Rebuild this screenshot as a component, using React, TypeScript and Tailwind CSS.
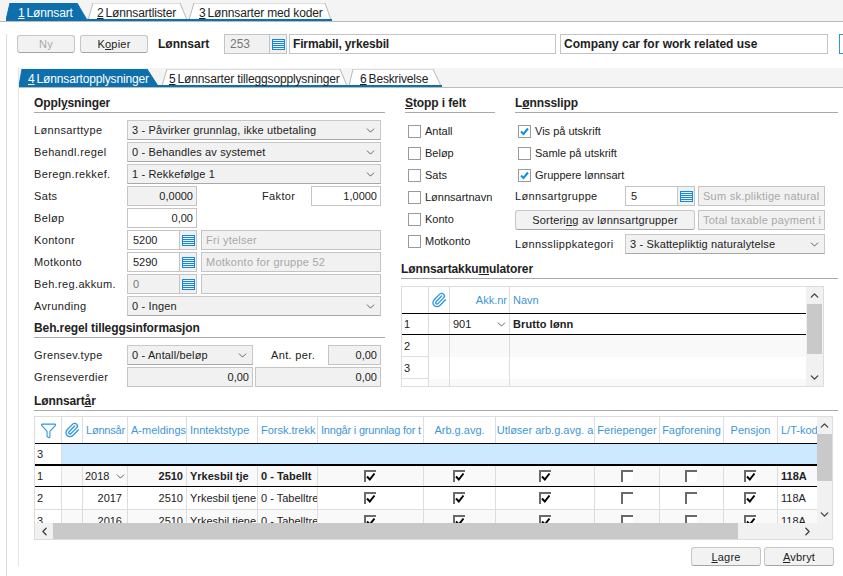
import React from "react";
import { ChevronDown, ChevronUp, ChevronLeft, ChevronRight, Paperclip, Funnel } from "lucide-react";

const ListIcon = () => (
  <svg width="13" height="11" viewBox="0 0 13 11" fill="none" stroke="#1087e0" strokeWidth="1">
    <rect x="0.5" y="0.5" width="12" height="10" />
    <path d="M1 2.5H12M1 4.5H12M1 6.5H12M1 8.5H12" />
  </svg>
);

const Tab = ({ w, points, active, pad, digit, text }: { w: string; points: string; active?: boolean; pad: string; digit: string; text: string }) => (
  <div className={`relative h-full shrink-0 ${w}`}>
    <svg className="absolute inset-0 h-full w-full">
      <polygon points={points} fill={active ? "#0d70ad" : "#ffffff"} stroke={active ? "#0d70ad" : "#b9b9b9"} />
    </svg>
    <div className={`relative flex h-full items-center whitespace-nowrap pt-[3px] text-[12px] tracking-[-0.15px] ${pad} ${active ? "text-white" : "text-[#222]"}`}>
      <u>{digit}</u>
      <span className="ml-[2px]">{text}</span>
    </div>
  </div>
);

const Heading = ({ children, w }: { children: React.ReactNode; w: string }) => (
  <div className={`h-[17px] border-b border-[#aaaaaa] text-[12px] font-bold leading-[14px] tracking-[-0.1px] text-[#222] ${w}`}>{children}</div>
);

const Row = ({ children, cls = "h-5 mb-[2px]" }: { children: React.ReactNode; cls?: string }) => (
  <div className={`flex items-stretch ${cls}`}>{children}</div>
);

const Label = ({ children, w = "w-[93px]" }: { children: React.ReactNode; w?: string }) => (
  <div className={`flex shrink-0 items-center whitespace-nowrap tracking-[0.35px] ${w}`}>{children}</div>
);

const Select = ({ value, w }: { value: string; w: string }) => (
  <div className={`flex shrink-0 items-center justify-between border border-[#c8c8c8] border-b-[#a8a8a8] bg-[#f1f1f1] pl-1 pr-[3px] tracking-[0.15px] ${w}`}>
    <span className="whitespace-nowrap">{value}</span>
    <ChevronDown size={13} strokeWidth={1.5} color="#444" />
  </div>
);

const Field = ({ value, w, right, disabled, muted }: { value: string; w: string; right?: boolean; disabled?: boolean; muted?: boolean }) => (
  <div
    className={`flex shrink-0 items-center overflow-hidden whitespace-nowrap border border-[#c4c4c4] ${w} ${right ? "justify-end pr-[3px]" : "pl-[4px] tracking-[0.25px]"} ${disabled ? "bg-[#f1f1f1]" : "bg-white"} ${muted ? "text-[#a8a8a8]" : ""}`}
  >
    {value}
  </div>
);

const Lookup = ({ value, w, disabled, big }: { value: string; w: string; disabled?: boolean; big?: boolean }) => (
  <div className={`flex shrink-0 border border-[#c4c4c4] ${w}`}>
    <div className={`flex flex-1 items-center pl-[5px] ${big ? "text-[12px]" : ""} ${disabled ? "bg-[#f1f1f1] text-[#777]" : "bg-white"}`}>{value}</div>
    <div className="flex w-[17px] items-center justify-center border-l border-[#c4c4c4] bg-[#f1f1f1]">
      <ListIcon />
    </div>
  </div>
);

const Btn = ({ children, w, muted }: { children: React.ReactNode; w: string; muted?: boolean }) => (
  <div
    className={`flex shrink-0 items-center justify-center rounded-[3px] border border-[#c6c6c6] border-b-[#a5a5a5] bg-[#f2f2f2] tracking-[0.2px] ${w} ${muted ? "text-[#aaaaaa]" : "text-[#222]"}`}
  >
    {children}
  </div>
);

const Check = ({ label, checked }: { label: string; checked?: boolean }) => (
  <div className="flex h-[22px] items-center">
    <div className="ml-[3px] flex h-[13px] w-[13px] shrink-0 items-center justify-center border border-[#9a9a9a] bg-white">
      {checked && (
        <svg width="11" height="11" viewBox="0 0 11 11" fill="none" stroke="#128ee0" strokeWidth="2">
          <path d="M2 5.5L4.5 8L9 2.5" />
        </svg>
      )}
    </div>
    <span className="ml-[4px] whitespace-nowrap">{label}</span>
  </div>
);

const GridCheck = ({ on }: { on?: boolean }) => (
  <div className="flex h-[12px] w-[12px] items-center justify-center border-l-2 border-t-2 border-[#6a6a6a] bg-white">
    {on && (
      <svg width="10" height="10" viewBox="0 0 10 10" fill="none" stroke="#000" strokeWidth="2">
        <path d="M1 4.5L3.8 7.5L8.5 1.5" />
      </svg>
    )}
  </div>
);

const akkCols = ["w-[27px]", "w-[21px]", "w-[60px]", "flex-1"];

const Akk = () => (
  <div className="flex h-[101px] w-[423px] border border-[#dddddd]">
    <div className="flex w-[404px] flex-col overflow-hidden">
      <div className="flex h-[27px] shrink-0 border-b border-black text-[#3d97d6]">
        <div className={`${akkCols[0]} border-r border-[#dddddd]`} />
        <div className={`${akkCols[1]} flex items-center justify-center border-r border-[#dddddd]`}>
          <Paperclip size={16} color="#2b97e0" />
        </div>
        <div className={`${akkCols[2]} flex items-center justify-end border-r border-[#dddddd] pr-[2px]`}>Akk.nr</div>
        <div className={`${akkCols[3]} flex items-center pl-[3px]`}>Navn</div>
      </div>
      <div className="flex h-[21px] shrink-0 border-b border-black bg-white">
        <div className={`${akkCols[0]} flex items-center border-r border-[#dddddd] pl-[2px]`}>1</div>
        <div className={`${akkCols[1]} border-r border-[#dddddd]`} />
        <div className={`${akkCols[2]} flex items-center justify-between border-r border-[#dddddd] pl-[3px] pr-[1px]`}>
          901
          <ChevronDown size={13} strokeWidth={1.5} color="#444" />
        </div>
        <div className={`${akkCols[3]} flex items-center pl-[3px] font-bold tracking-[0.1px]`}>Brutto lønn</div>
      </div>
      {["2", "3", "4"].map((n) => (
        <div key={n} className={`flex h-[22px] shrink-0 ${n === "3" ? "" : "bg-[#f9f9f9]"}`}>
          <div className={`${akkCols[0]} flex items-center border-b border-r border-[#dddddd] bg-white pl-[2px]`}>{n}</div>
          <div className={`${akkCols[1]} border-r border-[#dddddd]`} />
          <div className={`${akkCols[2]} border-r border-[#dddddd]`} />
          <div className={`${akkCols[3]}`} />
        </div>
      ))}
    </div>
    <div className="flex w-[17px] flex-col items-center bg-[#f1f1f1]">
      <div className="flex h-[17px] items-center justify-center">
        <ChevronUp size={13} strokeWidth={2.5} color="#444" />
      </div>
      <div className="h-[50px] w-[15px] bg-[#c9c9c9]" />
      <div className="mt-auto flex h-[17px] items-center justify-center">
        <ChevronDown size={13} strokeWidth={2.5} color="#444" />
      </div>
    </div>
  </div>
);

const cols = ["w-[27px]", "w-[21px]", "w-[45px]", "w-[59px]", "w-[71px]", "w-[60px]", "w-[106px]", "w-[72px]", "w-[99px]", "w-[65px]", "w-[64px]", "w-[54px]", "w-[39px]"];
const headers = ["Lønnsår", "A-meldings", "Inntektstype", "Forsk.trekk", "Inngår i grunnlag for t", "Arb.g.avg.", "Utløser arb.g.avg. a", "Feriepenger", "Fagforening", "Pensjon", "L/T-kod"];

const DataRow = ({ num, year, bold, h, pick, border, tint }: { num: string; year: string; bold?: boolean; h: string; pick?: boolean; border: string; tint?: boolean }) => {
  const marks = [true, true, true, false, false, true];
  const b = "border-r border-[#dddddd]";
  return (
    <div className={`flex shrink-0 ${h} ${border} ${tint ? "bg-[#f9f9f9]" : "bg-white"}`}>
      <div className={`${cols[0]} flex items-center bg-white ${b} pl-[2px]`}>{num}</div>
      <div className={`${cols[1]} ${b}`} />
      <div className={`${cols[2]} flex items-center ${pick ? "justify-between pl-[2px]" : "justify-end pr-[5px]"} ${b}`}>
        {year}
        {pick && <ChevronDown size={13} strokeWidth={1.5} color="#444" />}
      </div>
      <div className={`${cols[3]} flex items-center justify-end pr-[3px] ${b} ${bold ? "font-bold" : ""}`}>2510</div>
      <div className={`${cols[4]} flex items-center overflow-hidden whitespace-nowrap pl-[3px] ${b} ${bold ? "font-bold" : ""}`}>{bold ? "Yrkesbil tje" : "Yrkesbil tjene"}</div>
      <div className={`${cols[5]} flex items-center overflow-hidden whitespace-nowrap pl-[3px] ${b} ${bold ? "font-bold" : ""}`}>{bold ? "0 - Tabellt" : "0 - Tabelltre"}</div>
      {marks.map((m, i) => (
        <div key={i} className={`${cols[6 + i]} flex items-center justify-center pr-[1px] ${b}`}>
          <GridCheck on={m} />
        </div>
      ))}
      <div className={`${cols[12]} flex items-center pl-[3px] ${bold ? "font-bold" : ""}`}>118A</div>
    </div>
  );
};

const YearGrid = () => (
  <div className="flex h-[124px] w-[799px] border border-[#dddddd]">
    <div className="flex w-[782px] flex-col">
      <div className="flex h-[106px] flex-col overflow-hidden">
        <div className="flex h-[27px] shrink-0 border-b border-black text-[#3d97d6]">
          <div className={`${cols[0]} flex items-center justify-center border-r border-[#dddddd]`}>
            <Funnel size={17} color="#2b97e0" strokeWidth={1.5} />
          </div>
          <div className={`${cols[1]} flex items-center justify-center border-r border-[#dddddd]`}>
            <Paperclip size={16} color="#2b97e0" />
          </div>
          {headers.map((h, i) => (
            <div
              key={h}
              className={`${cols[i + 2]} flex items-center overflow-hidden whitespace-nowrap ${i === 4 ? "tracking-[-0.2px]" : ""} ${i === 0 ? "tracking-[-0.2px]" : ""} ${i >= 5 && i < 10 ? "justify-center" : "pl-[3px]"} ${i < 10 ? "border-r border-[#dddddd]" : ""}`}
            >
              {h}
            </div>
          ))}
        </div>
        <div className="flex h-[22px] shrink-0 border-b-2 border-black">
          <div className={`${cols[0]} flex items-center border-r border-[#dddddd] pl-[2px]`}>3</div>
          <div className="flex-1 bg-[#cce9ff]" />
        </div>
        <DataRow num="1" year="2018" bold pick tint h="h-[21px]" border="border-b border-black" />
        <DataRow num="2" year="2017" h="h-[22px]" border="" />
        <DataRow num="3" year="2016" tint h="h-[22px]" border="border-t border-[#dddddd]" />
      </div>
      <div className="flex h-[16px] bg-[#f1f1f1]">
        <div className="flex w-[18px] items-center justify-center">
          <ChevronLeft size={13} strokeWidth={2.5} color="#444" />
        </div>
        <div className="w-[685px] bg-[#c9c9c9]" />
        <div className="flex flex-1 items-center justify-end pr-[3px]">
          <ChevronRight size={13} strokeWidth={2.5} color="#444" />
        </div>
      </div>
    </div>
    <div className="flex w-[15px] flex-col items-center bg-[#f1f1f1]">
      <div className="flex h-[17px] items-center justify-center">
        <ChevronUp size={13} strokeWidth={2.5} color="#444" />
      </div>
      <div className="h-[47px] w-[15px] bg-[#c9c9c9]" />
      <div className="mt-[25px] flex h-[17px] items-center justify-center">
        <ChevronDown size={13} strokeWidth={2.5} color="#444" />
      </div>
    </div>
  </div>
);

export default function App() {
  return (
    <div className="h-[576px] w-[843px] overflow-hidden bg-white font-['Liberation_Sans',Arial,sans-serif] text-[11px] leading-[14px] text-[#222]">
      <div className="flex h-[22px] border-b border-[#bbbbbb] bg-[#f4f4f4] pl-[6px] pt-[3px]">
        <div className="flex h-[18px] border-b-2 border-[#0d70ad]">
          <Tab w="w-[81px]" active pad="pl-[12px]" digit="1" text="Lønnsart" points="0,17 4,0 71,0 81,17" />
          <Tab w="w-[101px]" pad="pl-[10px]" digit="2" text="Lønnsartlister" points="1,17 6,0 93,0 100,17" />
          <Tab w="w-[144px]" pad="pl-[11px]" digit="3" text="Lønnsarter med koder" points="1,17 6,0 137,0 143,17" />
        </div>
      </div>

      <div className="ml-[6px] h-[554px] border-l border-[#dddddd]">
        <div className="mt-[12px] flex h-[20px] pl-[10px]">
          <Btn w="w-[58px] h-[18px] mt-[1px]" muted>Ny</Btn>
          <Btn w="w-[68px] h-[18px] mt-[1px] ml-[5px]">
            <span>K<u>o</u>pier</span>
          </Btn>
          <div className="ml-[10px] flex w-[66px] shrink-0 items-center text-[12px] font-bold">Lønnsart</div>
          <Lookup value="253" w="w-[63px]" disabled big />
          <div className="ml-[2px] flex w-[267px] shrink-0 items-center border border-[#c4c4c4] pl-[3px] text-[12px] font-bold tracking-[-0.15px]">Firmabil, yrkesbil</div>
          <div className="ml-[4px] flex w-[268px] shrink-0 items-center border border-[#c4c4c4] pl-[3px] text-[12px] font-bold">Company car for work related use</div>
          <div className="ml-[11px] w-[20px] shrink-0 border border-[#2b97e0]" />
        </div>

        <div className="ml-[11px] mt-[14px] border-l border-[#e4e4e4]">
          <div className="flex h-[20px] border-b border-[#bbbbbb] bg-[#f4f4f4] pt-[1px]">
            <div className="flex h-[18px] border-b-2 border-[#0d70ad]">
              <Tab w="w-[143px]" active pad="pl-[9px]" digit="4" text="Lønnsartopplysninger" points="0,17 3,0 128,0 139,17" />
              <Tab w="w-[187px]" pad="pl-[7px]" digit="5" text="Lønnsarter tilleggsopplysninger" points="0,17 5,0 178,0 185,17" />
              <Tab w="w-[93px]" pad="pl-[11px]" digit="6" text="Beskrivelse" points="0,17 4,0 84,0 92,17" />
            </div>
          </div>

          <div className="pl-[15px] pt-[8px]">
            <div className="flex">
              <div className="w-[351px] shrink-0">
                <Heading w="w-full">Oppl<u>y</u>sninger</Heading>
                <div className="mt-[7px]">
                  <Row><Label>Lønnsarttype</Label><Select w="w-[254px]" value="3 - Påvirker grunnlag, ikke utbetaling" /></Row>
                  <Row><Label>Behandl.regel</Label><Select w="w-[254px]" value="0 - Behandles av systemet" /></Row>
                  <Row><Label>Beregn.rekkef.</Label><Select w="w-[254px]" value="1 - Rekkefølge 1" /></Row>
                  <Row>
                    <Label>Sats</Label>
                    <Field w="w-[70px]" value="0,0000" right disabled />
                    <Label w="w-[114px] pl-[65px]">Faktor</Label>
                    <Field w="w-[70px]" value="1,0000" right />
                  </Row>
                  <Row><Label>Beløp</Label><Field w="w-[70px]" value="0,00" right /></Row>
                  <Row>
                    <Label>Kontonr</Label>
                    <Lookup value="5200" w="w-[70px]" />
                    <div className="w-[4px]" />
                    <Field w="w-[180px]" value="Fri ytelser" disabled muted />
                  </Row>
                  <Row>
                    <Label>Motkonto</Label>
                    <Lookup value="5290" w="w-[70px]" />
                    <div className="w-[4px]" />
                    <Field w="w-[180px]" value="Motkonto for gruppe 52" disabled muted />
                  </Row>
                  <Row>
                    <Label>Beh.reg.akkum.</Label>
                    <Lookup value="0" w="w-[70px]" disabled />
                    <div className="w-[4px]" />
                    <Field w="w-[180px]" value="" disabled />
                  </Row>
                  <Row><Label>Avrunding</Label><Select w="w-[254px]" value="0 - Ingen" /></Row>
                </div>
                <div className="mt-[5px]">
                  <Heading w="w-full">Beh.re<u>g</u>el tilleggsinformasjon</Heading>
                </div>
                <div className="mt-[7px]">
                  <Row>
                    <Label>Grensev.type</Label>
                    <Select w="w-[126px]" value="0 - Antall/beløp" />
                    <Label w="w-[75px] pl-[18px]">Ant. per.</Label>
                    <Field w="w-[53px]" value="0,00" right disabled />
                  </Row>
                  <Row>
                    <Label>Grenseverdier</Label>
                    <Field w="w-[126px]" value="0,00" right disabled />
                    <div className="w-[2px]" />
                    <Field w="w-[126px]" value="0,00" right disabled />
                  </Row>
                </div>
              </div>

              <div className="ml-[16px] w-[437px] shrink-0">
                <div className="flex pl-[4px]">
                  <div className="w-[90px] shrink-0">
                    <Heading w="w-full"><u>S</u>topp i felt</Heading>
                    <div className="mt-[7px]">
                      {["Antall", "Beløp", "Sats", "Lønnsartnavn", "Konto", "Motkonto"].map((l) => (
                        <Check key={l} label={l} />
                      ))}
                    </div>
                  </div>
                  <div className="ml-[20px] w-[323px] shrink-0">
                    <Heading w="w-full">L<u>ø</u>nnsslipp</Heading>
                    <div className="mt-[7px]">
                      <Check label="Vis på utskrift" checked />
                      <Check label="Samle på utskrift" />
                      <Check label="Gruppere lønnsart" checked />
                      <Row cls="h-5 mb-[4px]">
                        <Label w="w-[110px]">Lønnsartgruppe</Label>
                        <Lookup value="5" w="w-[70px]" />
                        <div className="w-[3px]" />
                        <Field w="w-[127px]" value="Sum sk.pliktige natural" disabled muted />
                      </Row>
                      <Row cls="h-5 mb-[4px]">
                        <Btn w="w-[180px]"><span>Sorteri<u>n</u>g av lønnsartgrupper</span></Btn>
                        <div className="w-[3px]" />
                        <Field w="w-[127px]" value="Total taxable payment i" disabled muted />
                      </Row>
                      <Row>
                        <Label w="w-[110px]">Lønnsslippkategori</Label>
                        <Select w="w-[200px]" value="3 - Skattepliktig naturalytelse" />
                      </Row>
                    </div>
                  </div>
                </div>
                <div className="mt-[6px]">
                  <Heading w="w-full">Lønnsartakku<u>m</u>ulatorer</Heading>
                </div>
                <div className="mt-[7px]">
                  <Akk />
                </div>
              </div>
            </div>

            <div className="mt-[5px]">
              <Heading w="w-[804px]">Lønnsart<u>å</u>r</Heading>
            </div>
            <div className="mt-[5px]">
              <YearGrid />
            </div>
            <div className="mt-[7px] flex w-[800px] justify-end gap-[3px]">
              <Btn w="w-[70px] h-[19px]"><span><u>L</u>agre</span></Btn>
              <Btn w="w-[70px] h-[19px]"><span><u>A</u>vbryt</span></Btn>
            </div>
          </div>
        </div>
      </div>
    </div>
  );
}
